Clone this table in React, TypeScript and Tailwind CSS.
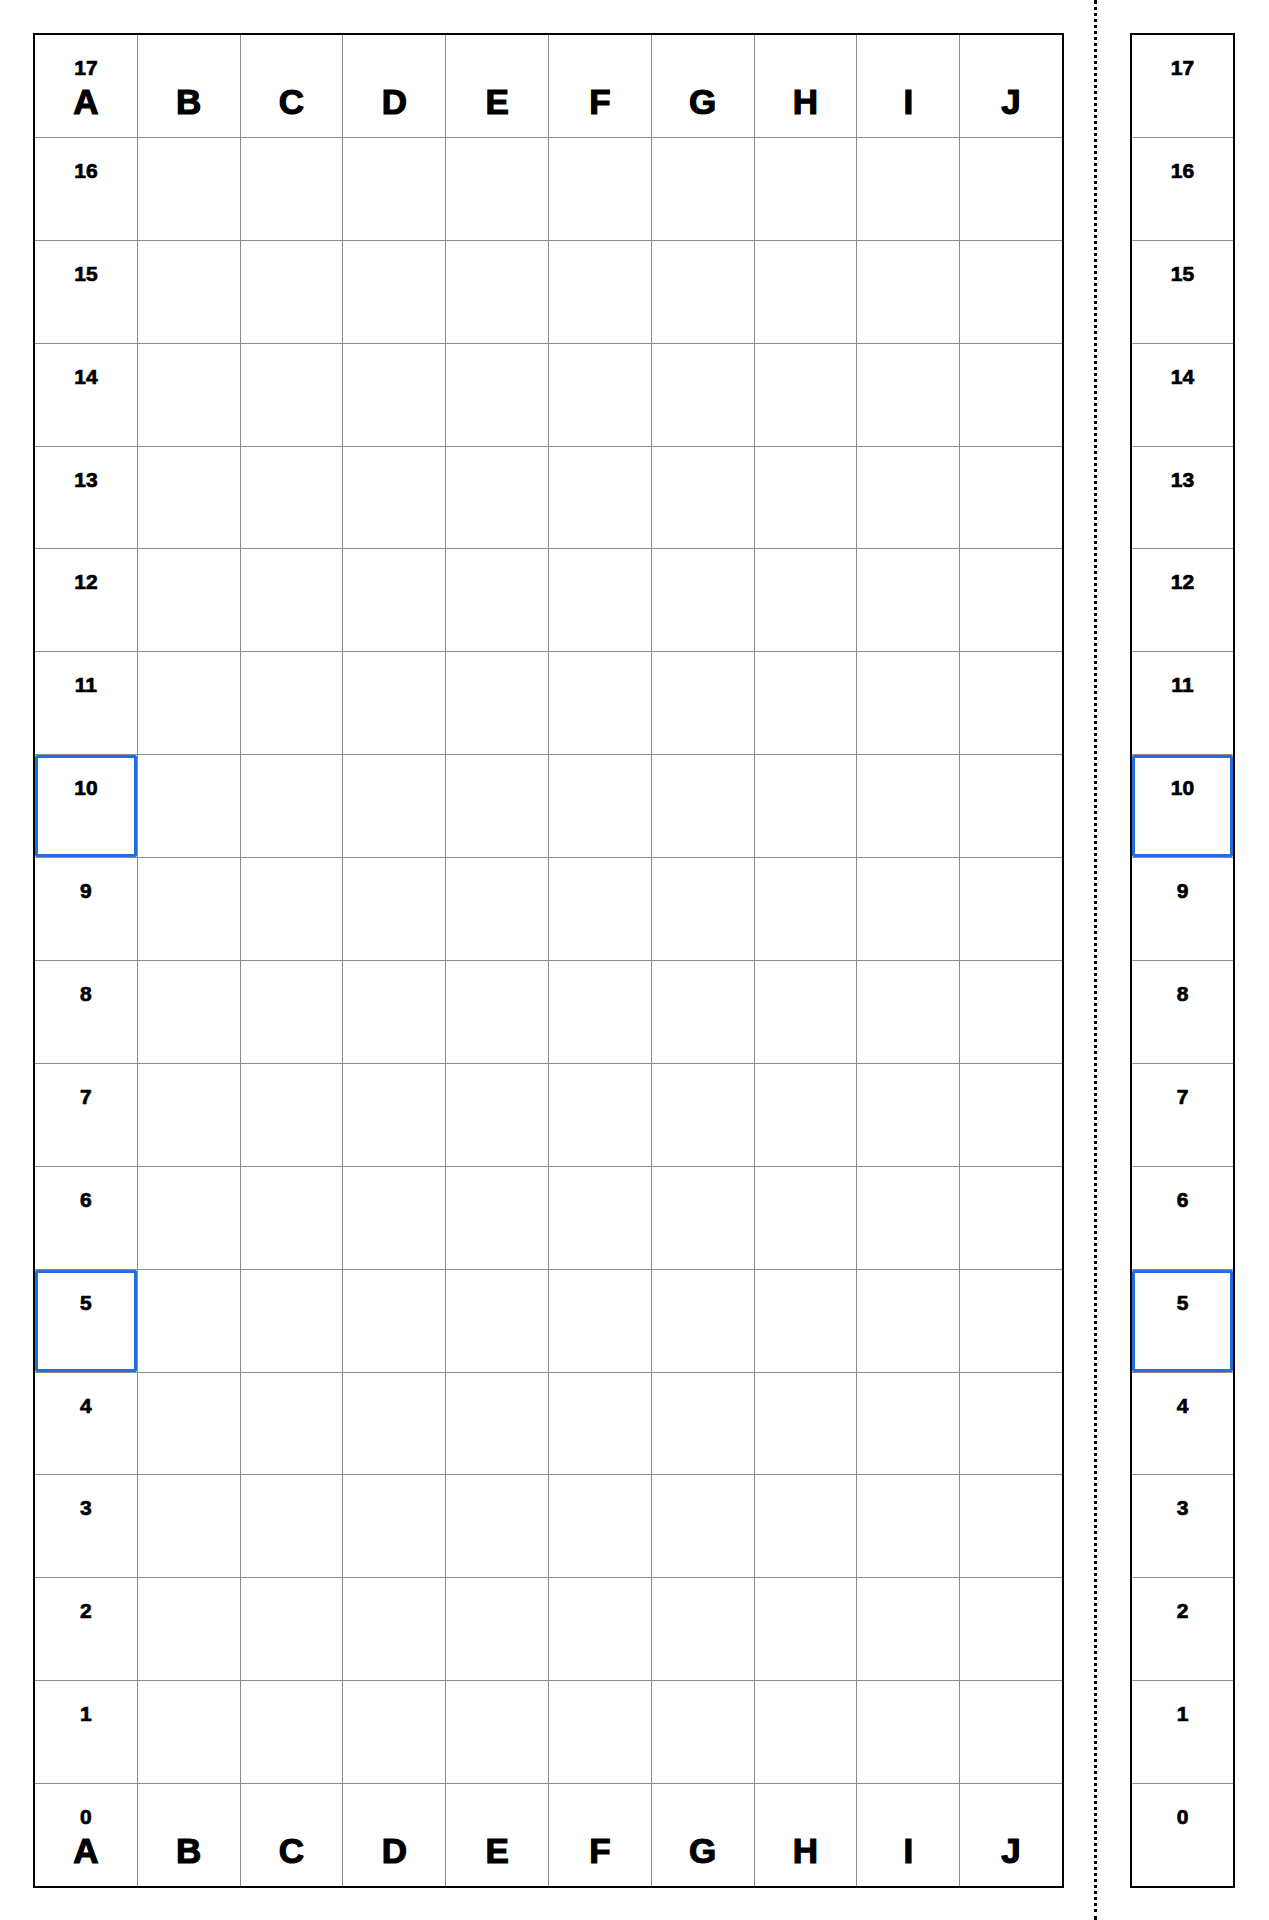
const COLS = ['A', 'B', 'C', 'D', 'E', 'F', 'G', 'H', 'I', 'J'];
const ROWS = Array.from({ length: 18 }, (_, i) => 17 - i);
const MARKED = [10, 5];

function Cell({ row, col, letter }: { row: number; col: number; letter: boolean }) {
    const showNum = col === 0;
    const marked = col === 0 && MARKED.includes(row);
    return (
        <div className="relative bg-white flex flex-col items-center">
            {showNum && (
                <span className="pt-[22px] text-[21px] leading-none font-bold [-webkit-text-stroke:0.7px_black]">{row}</span>
            )}
            {letter && (
                <span
                    className={`text-[35px] leading-none font-bold [-webkit-text-stroke:1.2px_black] ${
                        showNum ? 'mt-[6px]' : 'mt-[49px]'
                    }`}
                >
                    {COLS[col]}
                </span>
            )}
            {marked && <div className="absolute inset-0 border-[3px] border-[#1f6fe0] rounded-[2px]" />}
        </div>
    );
}

export default function App() {
    return (
        <div
            className="h-[1920px] w-[1269px] bg-white text-black flex pl-[33px] overflow-hidden"
            style={{ fontFamily: '"Liberation Sans", Arial, sans-serif' }}
        >
            {/* main board */}
            <div className="mt-[33px] self-start border-2 border-black bg-[#8c8c8c] grid grid-cols-[repeat(10,101.8px)] grid-rows-[repeat(18,101.9px)] gap-px">
                {ROWS.map((row) =>
                    COLS.map((_, col) => (
                        <Cell key={`${row}-${col}`} row={row} col={col} letter={row === 17 || row === 0} />
                    ))
                )}
            </div>

            {/* divider */}
            <div className="ml-[30px] h-full border-l-[3px] border-dotted border-black" />

            {/* side column */}
            <div className="ml-[33px] mt-[33px] self-start border-2 border-black bg-[#8c8c8c] grid grid-cols-[101px] grid-rows-[repeat(18,101.9px)] gap-px">
                {ROWS.map((row) => (
                    <Cell key={row} row={row} col={0} letter={false} />
                ))}
            </div>
        </div>
    );
}
